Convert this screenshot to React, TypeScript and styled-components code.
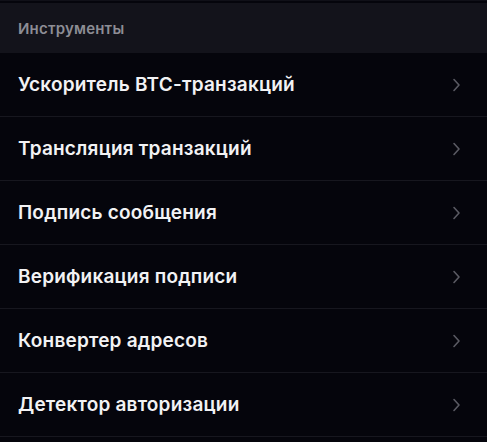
import React from "react";
import styled, { createGlobalStyle } from "styled-components";

const GlobalStyle = createGlobalStyle`
  html, body {
    margin: 0;
    padding: 0;
    background: #05050c;
  }
  body {
    font-family: Inter, "Noto Sans", sans-serif;
    -webkit-font-smoothing: antialiased;
  }
`;

const tools = [
  "Ускоритель BTC-транзакций",
  "Трансляция транзакций",
  "Подпись сообщения",
  "Верификация подписи",
  "Конвертер адресов",
  "Детектор авторизации",
];

function Chevron() {
  return (
    <svg width="9" height="14" viewBox="0 0 9 14" fill="none">
      <path
        d="M2 1.5L7 7L2 12.5"
        stroke="#5a5a63"
        strokeWidth="1.6"
        strokeLinecap="round"
        strokeLinejoin="round"
      />
    </svg>
  );
}

function App() {
  return (
    <>
      <GlobalStyle />
      <Page>
        <Header>Инструменты</Header>
        <List>
          {tools.map((t) => (
            <Row key={t}>
              <Label>{t}</Label>
              <Chevron />
            </Row>
          ))}
        </List>
      </Page>
    </>
  );
}

export default App;

const Page = styled.div`
  width: 487px;
  height: 442px;
  background: #05050c;
  padding-top: 2px;
  box-sizing: border-box;
  border-top: 1px solid #101018;
`;

const Header = styled.div`
  height: 50px;
  background: #13131b;
  color: #8d8d95;
  font-size: 15px;
  font-weight: 600;
  letter-spacing: 0.2px;
  display: flex;
  align-items: center;
  padding-left: 18px;
  box-sizing: border-box;
`;

const List = styled.div`
  display: flex;
  flex-direction: column;
`;

const Row = styled.div`
  height: 64px;
  display: flex;
  align-items: center;
  justify-content: space-between;
  padding: 0 26px 0 18px;
  border-bottom: 1px solid #17171f;
  box-sizing: border-box;
  cursor: pointer;
`;

const Label = styled.span`
  color: #f2f2f4;
  font-size: 19px;
  font-weight: 600;
  letter-spacing: 0.2px;
`;
